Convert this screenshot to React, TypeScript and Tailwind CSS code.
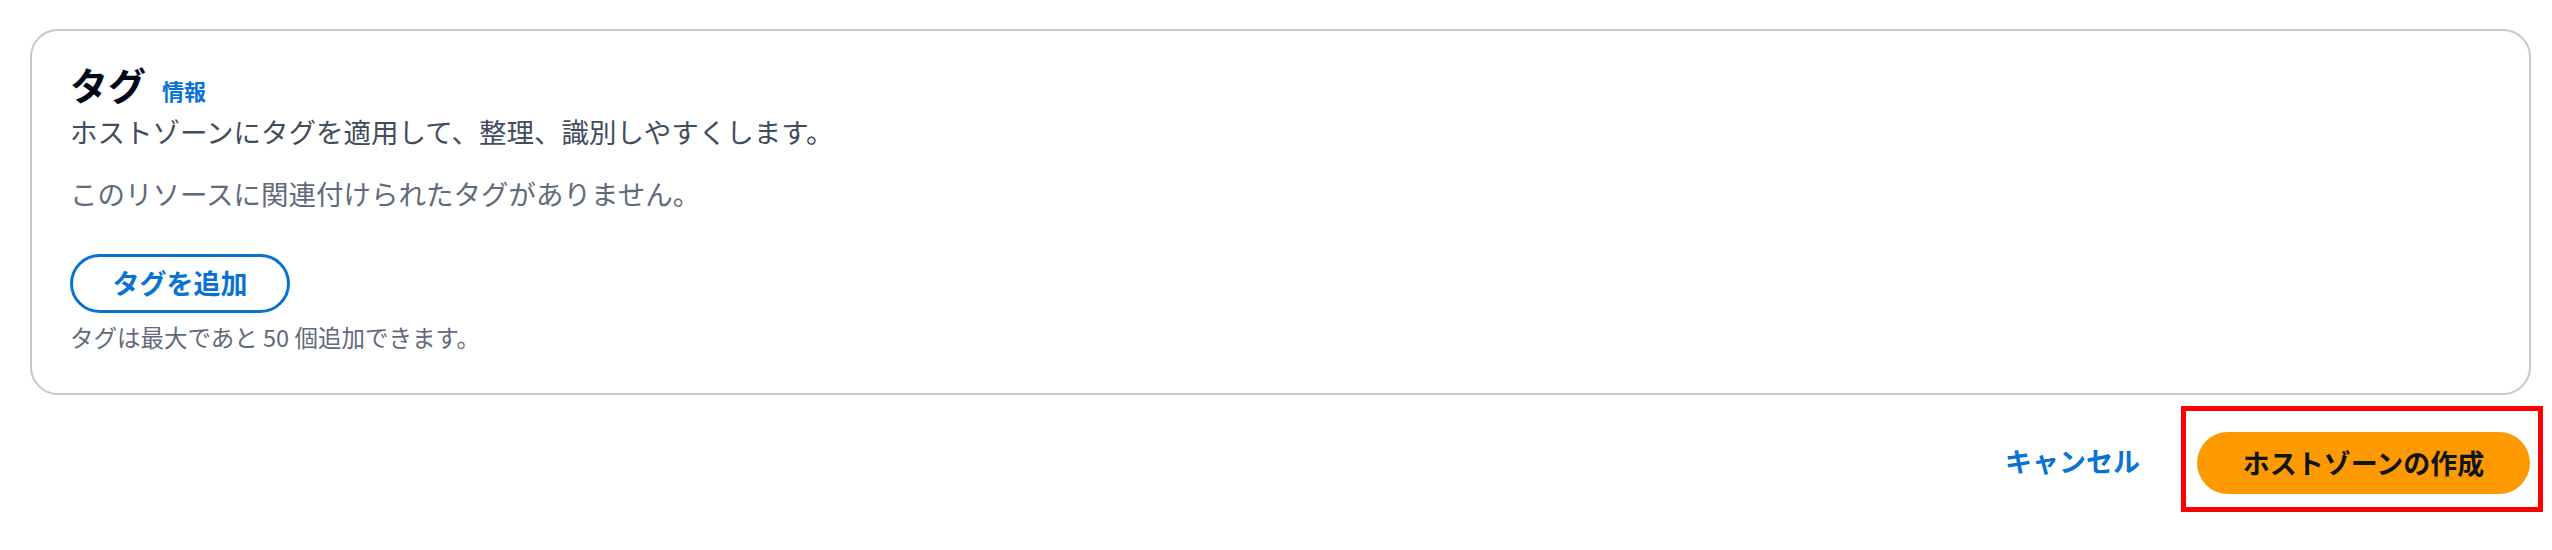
import React from "react";

export default function App() {
  return (
    <div
      className="w-[2552px] h-[550px] bg-white pt-[29px] pl-[30px] pr-[9px]"
      style={{ fontFamily: '"Noto Sans CJK JP", "Noto Sans", sans-serif' }}
    >
      <div className="mr-[12px] border-2 border-[#c6c6cd] rounded-[28px] pl-[38px] pr-[38px] pt-[29px] pb-[41px]">
        <div className="flex items-baseline h-[48px]">
          <h2 className="text-[38px] leading-[48px] font-bold text-[#000716]">タグ</h2>
          <a className="ml-[16px] text-[22px] leading-[30px] font-bold text-[#0972d3]">情報</a>
        </div>
        <p className="mt-[5px] text-[27.5px] leading-[36px] text-[#414d5c]">
          ホストゾーンにタグを適用して、整理、識別しやすくします。
        </p>
        <p className="mt-[26px] text-[27.5px] leading-[36px] text-[#5f6b7a]">
          このリソースに関連付けられたタグがありません。
        </p>
        <button className="mt-[43px] w-[220px] h-[59px] rounded-full border-[3px] border-[#0972d3] text-[27px] font-bold text-[#0972d3] flex items-center justify-center">
          タグを追加
        </button>
        <p className="mt-[9px] text-[23.5px] leading-[30px] text-[#5f6b7a]">
          タグは最大であと 50 個追加できます。
        </p>
      </div>
      <div className="mt-[11px] flex justify-end items-center">
        <button className="mt-[4px] text-[27px] font-bold text-[#0972d3] leading-[36px]">キャンセル</button>
        <div className="ml-[41px] border-[5px] border-[#ff0000] pl-[11px] pr-[8px] pt-[21px] pb-[13px]">
          <button className="w-[333px] h-[62px] rounded-full bg-[#ff9900] text-[27px] font-bold text-[#0f141a] flex items-center justify-center">
            ホストゾーンの作成
          </button>
        </div>
      </div>
    </div>
  );
}
